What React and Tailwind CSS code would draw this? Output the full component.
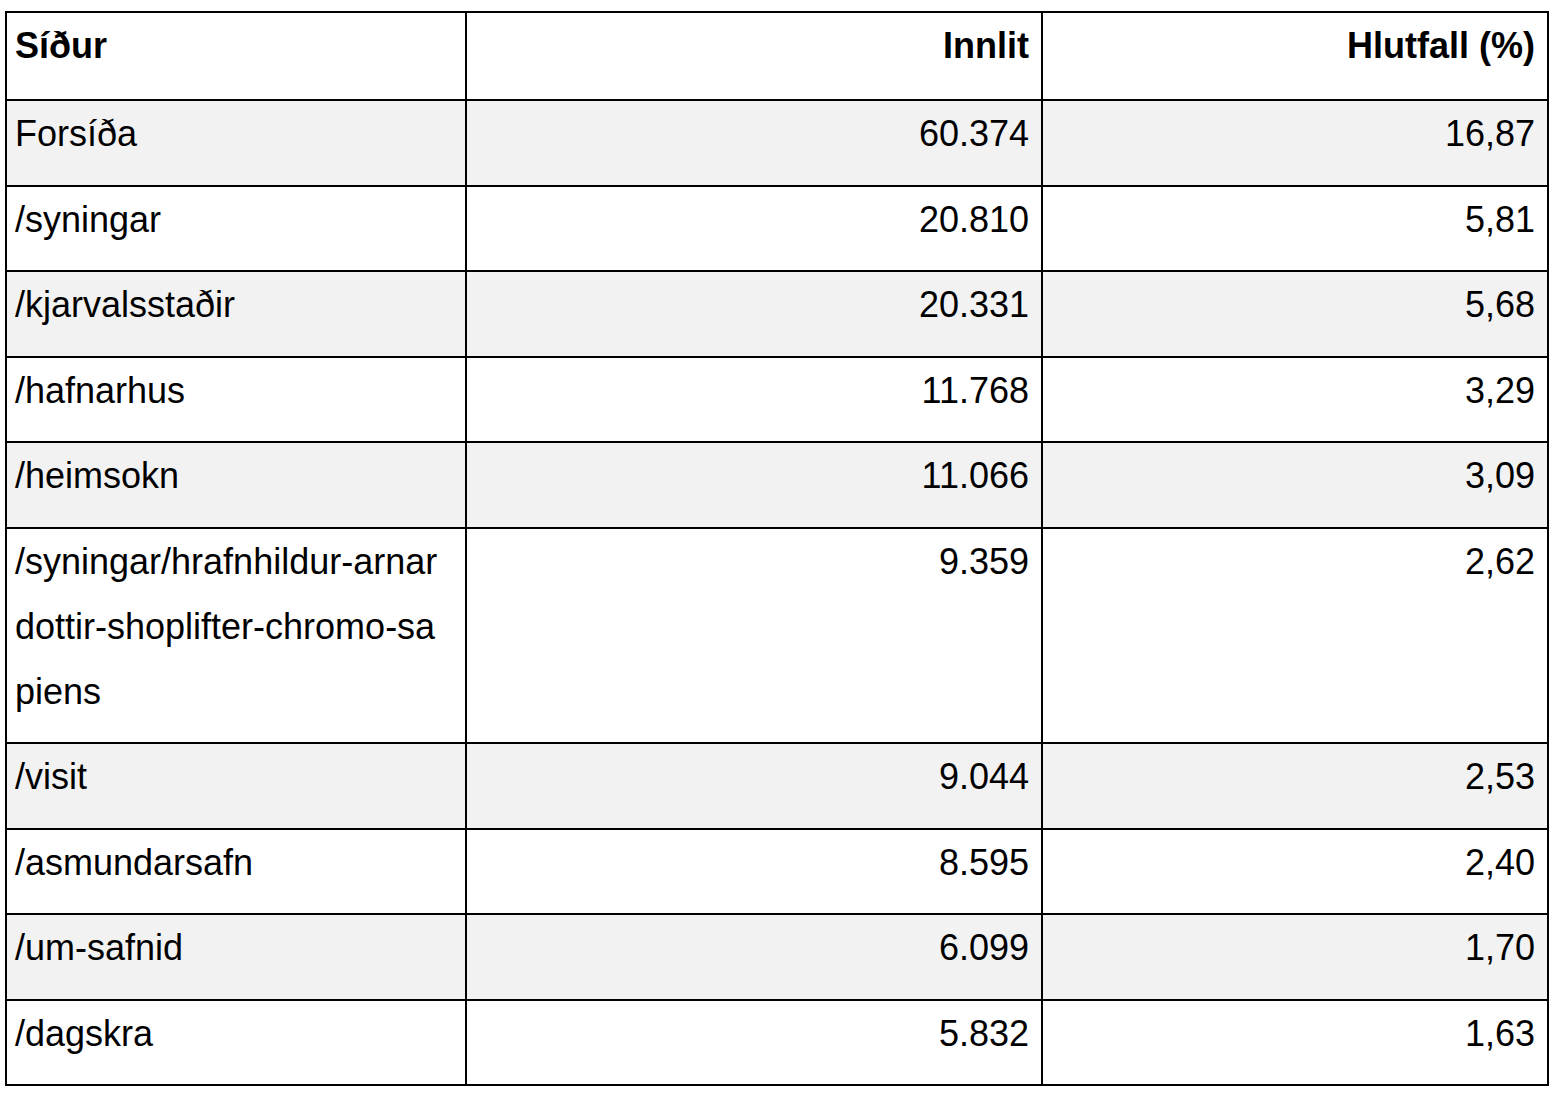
import React from 'react';

const rows = [
  { page: ['Forsíða'], views: '60.374', share: '16,87' },
  { page: ['/syningar'], views: '20.810', share: '5,81' },
  { page: ['/kjarvalsstaðir'], views: '20.331', share: '5,68' },
  { page: ['/hafnarhus'], views: '11.768', share: '3,29' },
  { page: ['/heimsokn'], views: '11.066', share: '3,09' },
  {
    page: ['/syningar/hrafnhildur-arnar', 'dottir-shoplifter-chromo-sa', 'piens'],
    views: '9.359',
    share: '2,62',
  },
  { page: ['/visit'], views: '9.044', share: '2,53' },
  { page: ['/asmundarsafn'], views: '8.595', share: '2,40' },
  { page: ['/um-safnid'], views: '6.099', share: '1,70' },
  { page: ['/dagskra'], views: '5.832', share: '1,63' },
];

export default function App() {
  return (
    <div className="bg-white min-h-screen pt-[11px] pl-[5px] font-['Liberation_Sans',Arial,sans-serif] text-black">
      <table className="table-fixed border-collapse border-2 border-black w-[1542px] text-[36px] leading-[65px]">
        <colgroup>
          <col className="w-[460px]" />
          <col className="w-[576px]" />
          <col className="w-[506px]" />
        </colgroup>
        <thead>
          <tr className="bg-white">
            <th className="border-2 border-black text-left align-top font-bold pl-[8px] pr-[10px] pt-0 pb-[21px]">
              Síður
            </th>
            <th className="border-2 border-black text-right align-top font-bold pl-[8px] pr-[12px] pt-0 pb-[21px]">
              Innlit
            </th>
            <th className="border-2 border-black text-right align-top font-bold pl-[8px] pr-[12px] pt-0 pb-[21px]">
              Hlutfall (%)
            </th>
          </tr>
        </thead>
        <tbody>
          {rows.map((r, i) => (
            <tr key={i} className={i % 2 === 0 ? 'bg-[#f2f2f2]' : 'bg-white'}>
              <td className="border-2 border-black text-left align-top font-normal pl-[8px] pr-[6px] pt-0 pb-[18.5px]">
                {r.page.map((line, j) => (
                  <React.Fragment key={j}>
                    {j > 0 && <br />}
                    {line}
                  </React.Fragment>
                ))}
              </td>
              <td className="border-2 border-black text-right align-top pl-[8px] pr-[12px] pt-0 pb-[18.5px]">
                {r.views}
              </td>
              <td className="border-2 border-black text-right align-top pl-[8px] pr-[12px] pt-0 pb-[18.5px]">
                {r.share}
              </td>
            </tr>
          ))}
        </tbody>
      </table>
    </div>
  );
}
